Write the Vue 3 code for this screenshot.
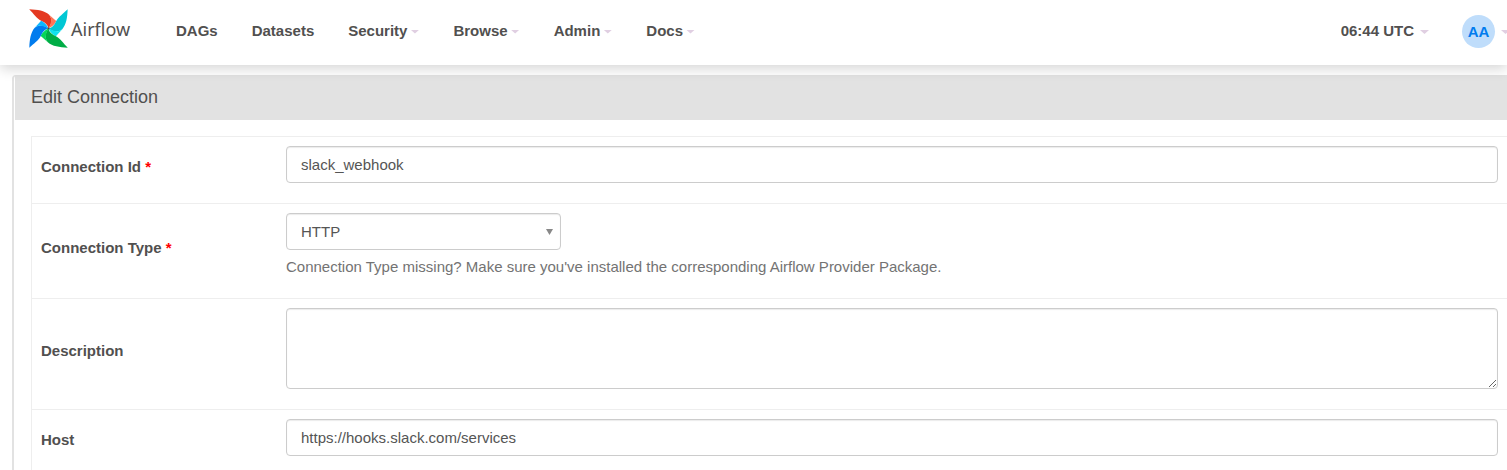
<script setup>
import { ref } from 'vue'

const menu = [
  { label: 'DAGs', caret: false },
  { label: 'Datasets', caret: false },
  { label: 'Security', caret: true },
  { label: 'Browse', caret: true },
  { label: 'Admin', caret: true },
  { label: 'Docs', caret: true },
]

const blades = [
  { turn: 0, main: '#e43921', light: '#ff7557' },
  { turn: 90, main: '#00c7d4', light: '#11e1ee' },
  { turn: 180, main: '#00ad46', light: '#04d659' },
  { turn: 270, main: '#017cee', light: '#0cb6ff' },
]

const connId = ref('slack_webhook')
const connType = ref('HTTP')
const description = ref('')
const host = ref('https://hooks.slack.com/services')
</script>

<template>
  <div class="page">
    <header class="navbar">
      <a class="brand" href="#">
        <svg class="pinwheel" viewBox="0 0 58 58" aria-hidden="true">
          <g v-for="b in blades" :key="b.turn" :transform="`rotate(${b.turn} 29 29)`">
            <path :fill="b.main" d="M.3 .5C7 7 11 14 18 17.500C23 20 28 23 29 29C34 22 35 15 30 8.500C23 2.500 13 1 .3 .5z" />
            <path :fill="b.light" d="M30 8.500C35 15 33 21 29 29C34 27 39 22 40.500 18z" />
          </g>
          <circle cx="29" cy="29" r="1.500" fill="#4a4848" />
        </svg>
        <span class="wordmark">Airflow</span>
      </a>
      <nav class="menu">
        <a v-for="item in menu" :key="item.label" href="#">{{ item.label }}<i v-if="item.caret" class="caret"></i></a>
      </nav>
      <div class="tools">
        <button type="button" class="clock">06:44 UTC<i class="caret"></i></button>
        <button type="button" class="user"><span class="avatar">AA</span><i class="caret"></i></button>
      </div>
    </header>

    <main class="panel">
      <h1 class="title">Edit Connection</h1>
      <form class="body" @submit.prevent>
        <table>
          <tbody>
            <tr>
              <th scope="row"><label for="conn_id">Connection Id <b>*</b></label></th>
              <td><input id="conn_id" v-model="connId" class="control" type="text" /></td>
            </tr>
            <tr>
              <th scope="row"><label for="conn_type">Connection Type <b>*</b></label></th>
              <td>
                <div class="select">
                  <select id="conn_type" v-model="connType" class="control">
                    <option>HTTP</option>
                  </select>
                  <svg class="arrow" viewBox="0 0 7 6" aria-hidden="true"><path d="M0 0h7L3.500 6z" fill="#888" /></svg>
                </div>
                <p class="help">Connection Type missing? Make sure you've installed the corresponding Airflow Provider Package.</p>
              </td>
            </tr>
            <tr>
              <th scope="row"><label for="description">Description</label></th>
              <td><textarea id="description" v-model="description" class="control"></textarea></td>
            </tr>
            <tr>
              <th scope="row"><label for="host">Host</label></th>
              <td><input id="host" v-model="host" class="control" type="text" /></td>
            </tr>
          </tbody>
        </table>
      </form>
    </main>
  </div>
</template>

<style>
body {
  margin: 0;
  background: #fff;
  overflow: hidden;
}
</style>

<style scoped>
.page {
  font-family: "Liberation Sans", Arial, sans-serif;
  font-size: 15px;
  line-height: 22px;
  color: #51504f;
}
.page * {
  box-sizing: border-box;
}
.navbar {
  position: relative;
  display: flex;
  align-items: center;
  height: 65px;
  padding: 0 0 0 29px;
  background: #fff;
  box-shadow: 0 4px 12px rgba(0, 0, 0, 0.16);
  font-weight: bold;
}
.brand {
  display: flex;
  align-items: center;
  gap: 3px;
  width: 131px;
  padding-bottom: 8px;
  color: #51504f;
  text-decoration: none;
}
.pinwheel {
  width: 39px;
  height: 39px;
}
.wordmark {
  font-family: "Noto Sans", sans-serif;
  font-size: 18px;
  font-weight: normal;
}
.menu {
  display: flex;
  gap: 34px;
  padding: 0 0 4px 16px;
}
.menu a {
  display: flex;
  align-items: center;
  gap: 3px;
  color: inherit;
  text-decoration: none;
}
.caret {
  flex: none;
  width: 9px;
  height: 4px;
  margin-top: 2px;
  background: #e0cfe2;
  clip-path: polygon(0 0, 100% 0, 50% 100%);
}
.tools {
  display: flex;
  align-items: center;
  gap: 33px;
  margin: 0 -3px 3px auto;
}
.tools button {
  display: flex;
  align-items: center;
  gap: 6px;
  padding: 0;
  border: 0;
  background: none;
  font: inherit;
  color: inherit;
}
.avatar {
  width: 33px;
  height: 33px;
  border-radius: 50%;
  background: #bfddfb;
  color: #017cee;
  line-height: 34px;
  text-align: center;
}
.panel {
  margin: 10px 0 0 12px;
  border: 2px solid #e2e2e2;
  border-width: 1px 0 0 2px;
  border-radius: 4px 0 0 0;
}
.title {
  margin: 0 0 0 1px;
  padding: 10px 16px 12px;
  background: #e2e2e2;
  font-size: 18px;
  font-weight: normal;
}
.body {
  padding: 16px 0 0 17px;
}
table {
  width: 100%;
  border-collapse: separate;
  border-spacing: 0;
  border-left: 1px solid #eee;
}
th,
td {
  padding: 9px;
  border-top: 1px solid #eee;
  text-align: left;
  vertical-align: top;
}
th {
  width: 245px;
  padding: 9px 0 15px 9px;
  vertical-align: middle;
}
td {
  padding-bottom: 20px;
}
th b {
  color: #f00;
}
.control {
  display: block;
  width: 100%;
  height: 37px;
  margin: 0;
  padding: 0 14px;
  border: 1px solid #ccc;
  border-radius: 4px;
  box-shadow: inset 0 1px 1px rgba(0, 0, 0, 0.08);
  background: #fff;
  font: inherit;
  color: #555;
}
textarea.control {
  height: 81px;
  resize: vertical;
}
.select {
  position: relative;
  width: 275px;
}
select.control {
  appearance: none;
}
.arrow {
  position: absolute;
  top: 16px;
  right: 8px;
  width: 7px;
  height: 6px;
}
.help {
  margin: 6px 0 0;
  color: #737373;
}
</style>
